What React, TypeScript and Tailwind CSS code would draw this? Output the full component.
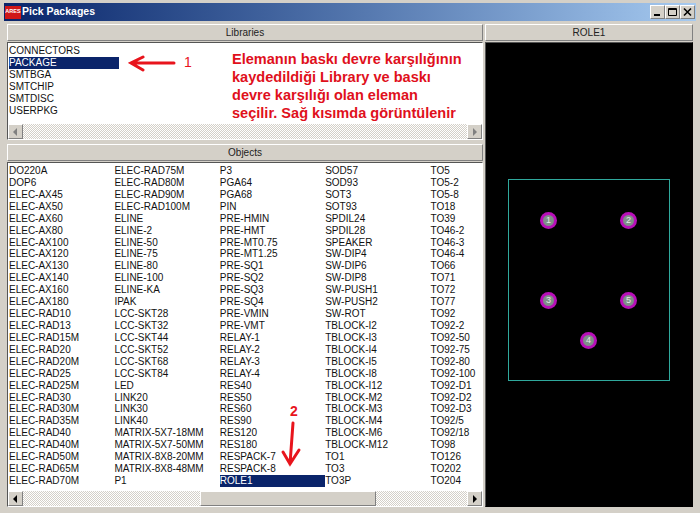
import * as React from "react";

const libraries = ["CONNECTORS", "PACKAGE", "SMTBGA", "SMTCHIP", "SMTDISC", "USERPKG"];

const objects = [
  ["DO220A", "DOP6", "ELEC-AX45", "ELEC-AX50", "ELEC-AX60", "ELEC-AX80", "ELEC-AX100", "ELEC-AX120", "ELEC-AX130", "ELEC-AX140", "ELEC-AX160", "ELEC-AX180", "ELEC-RAD10", "ELEC-RAD13", "ELEC-RAD15M", "ELEC-RAD20", "ELEC-RAD20M", "ELEC-RAD25", "ELEC-RAD25M", "ELEC-RAD30", "ELEC-RAD30M", "ELEC-RAD35M", "ELEC-RAD40", "ELEC-RAD40M", "ELEC-RAD50M", "ELEC-RAD65M", "ELEC-RAD70M"],
  ["ELEC-RAD75M", "ELEC-RAD80M", "ELEC-RAD90M", "ELEC-RAD100M", "ELINE", "ELINE-2", "ELINE-50", "ELINE-75", "ELINE-80", "ELINE-100", "ELINE-KA", "IPAK", "LCC-SKT28", "LCC-SKT32", "LCC-SKT44", "LCC-SKT52", "LCC-SKT68", "LCC-SKT84", "LED", "LINK20", "LINK30", "LINK40", "MATRIX-5X7-18MM", "MATRIX-5X7-50MM", "MATRIX-8X8-20MM", "MATRIX-8X8-48MM", "P1"],
  ["P3", "PGA64", "PGA68", "PIN", "PRE-HMIN", "PRE-HMT", "PRE-MT0.75", "PRE-MT1.25", "PRE-SQ1", "PRE-SQ2", "PRE-SQ3", "PRE-SQ4", "PRE-VMIN", "PRE-VMT", "RELAY-1", "RELAY-2", "RELAY-3", "RELAY-4", "RES40", "RES50", "RES60", "RES90", "RES120", "RES180", "RESPACK-7", "RESPACK-8", "ROLE1"],
  ["SOD57", "SOD93", "SOT3", "SOT93", "SPDIL24", "SPDIL28", "SPEAKER", "SW-DIP4", "SW-DIP6", "SW-DIP8", "SW-PUSH1", "SW-PUSH2", "SW-ROT", "TBLOCK-I2", "TBLOCK-I3", "TBLOCK-I4", "TBLOCK-I5", "TBLOCK-I8", "TBLOCK-I12", "TBLOCK-M2", "TBLOCK-M3", "TBLOCK-M4", "TBLOCK-M6", "TBLOCK-M12", "TO1", "TO3", "TO3P"],
  ["TO5", "TO5-2", "TO5-8", "TO18", "TO39", "TO46-2", "TO46-3", "TO46-4", "TO66", "TO71", "TO72", "TO77", "TO92", "TO92-2", "TO92-50", "TO92-75", "TO92-80", "TO92-100", "TO92-D1", "TO92-D2", "TO92-D3", "TO92/5", "TO92/18", "TO98", "TO126", "TO202", "TO204"],
];

const raised =
  "bg-[#d4d0c8] border border-t-white border-l-white border-r-[#808080] border-b-[#808080]";

function HeaderBar({ label }: { label: string }) {
  return (
    <div className={`${raised} h-[17px] flex items-center justify-center text-[10px] text-[#222]`}>
      {label}
    </div>
  );
}

function WinButton({ children }: { children: React.ReactNode }) {
  return (
    <div className={`${raised} w-[15px] h-[14px] flex items-center justify-center`}>
      <svg width="11" height="10" viewBox="0 0 11 10" className="text-black">
        {children}
      </svg>
    </div>
  );
}

function ScrollArrow({ dir, light }: { dir: "left" | "right"; light?: boolean }) {
  return (
    <div className={`${raised} w-[15px] h-full flex items-center justify-center shrink-0`}>
      <svg width="5" height="8" viewBox="0 0 5 8">
        <path d={dir === "left" ? "M4 0 L0 4 L4 8 Z" : "M1 0 L5 4 L1 8 Z"} fill={light ? "#808080" : "#000"} />
      </svg>
    </div>
  );
}

const dither =
  "bg-[repeating-conic-gradient(#ffffff_0_25%,#d4d0c8_0_50%)] bg-[length:2px_2px]";

function Pad({ n }: { n: number }) {
  return (
    <div className="w-[17px] h-[17px] rounded-full bg-[#b80fb8] flex items-center justify-center">
      <div className="w-[11px] h-[11px] rounded-full bg-[#7f8f88] flex items-center justify-center text-[9px] leading-none text-[#e8e8e8]">
        {n}
      </div>
    </div>
  );
}

export default function App() {
  return (
    <div
      className="w-[700px] h-[513px] bg-[#d4d0c8] overflow-hidden px-[4px] pt-[3px] flex flex-col"
      style={{ fontFamily: '"Liberation Sans", Arial, sans-serif' }}
    >
      {/* title bar */}
      <div className="h-[18px] shrink-0 bg-gradient-to-r from-[#0a246a] to-[#a6caf0] flex items-center pl-[1px] pr-[1px]">
        <div className="w-[16px] h-[13px] bg-[#d01818] flex items-center justify-center text-[5.5px] font-bold text-white leading-none">
          ARES
        </div>
        <span className="ml-[1px] text-[10.5px] font-bold text-white">Pick Packages</span>
        <div className="ml-auto flex items-center">
          <WinButton>
            <rect x="2" y="7" width="6" height="2" fill="currentColor" />
          </WinButton>
          <WinButton>
            <path d="M1.5 1.5 H9.5 V8.5 H1.5 Z M1.5 2.5 H9.5" stroke="currentColor" fill="none" />
          </WinButton>
          <WinButton>
            <path d="M2 1.5 L9 8.5 M9 1.5 L2 8.5" stroke="currentColor" strokeWidth="1.6" fill="none" />
          </WinButton>
        </div>
      </div>

      <div className="flex gap-[2px] pl-[3px] pr-[3px] pt-[3px] h-[488px]">
        {/* left column */}
        <div className="w-[476px] flex flex-col">
          <HeaderBar label="Libraries" />
          <div className="relative mt-[1px] h-[98px] border border-t-[#555] border-l-[#555] border-r-white border-b-white bg-white flex flex-col">
            <div className="flex-1 pt-[2px] pl-[1px] text-[10px] text-[#111]">
              {libraries.map((name) => (
                <div
                  key={name}
                  className={`h-[12px] leading-[12px] w-[110px] ${name === "PACKAGE" ? "bg-[#0a246a] text-white" : ""}`}
                >
                  {name}
                </div>
              ))}
            </div>
            <div className="h-[15px] flex">
              <ScrollArrow dir="left" light />
              <div className={`flex-1 ${dither}`} />
              <ScrollArrow dir="right" light />
            </div>

            {/* callout 1 */}
            <svg className="absolute left-[120px] top-[9px]" width="60" height="22" viewBox="0 0 60 22">
              <path d="M46 11 H4 M15 5 L3 11 L15 18" stroke="#e8141c" strokeWidth="3" fill="none" strokeLinecap="round" />
            </svg>
            <span className="absolute left-[176px] top-[12px] text-[14px] leading-[14px] text-[#e8141c]">1</span>
            <div className="absolute left-[224px] top-[7px] w-[250px] text-[14.55px] leading-[18px] font-bold text-[#e0101c] whitespace-nowrap">
              <div>Elemanın baskı devre karşılığının</div>
              <div>kaydedildiği Library ve baskı</div>
              <div>devre karşılığı olan eleman</div>
              <div>seçilir. Sağ kısımda görüntülenir</div>
            </div>
          </div>

          <div className="mt-[4px]">
            <HeaderBar label="Objects" />
          </div>
          <div className="relative mt-[1px] h-[345px] border border-t-[#555] border-l-[#555] border-r-white border-b-white bg-white flex flex-col">
            <div className="flex-1 flex pt-[2px] pl-[1px] text-[10px] text-[#111]">
              {objects.map((col, i) => (
                <div key={i} className="w-[105.4px] shrink-0">
                  {col.map((name) => (
                    <div
                      key={name}
                      className={`h-[11.93px] leading-[12px] whitespace-nowrap ${name === "ROLE1" ? "bg-[#0a246a] text-white" : ""}`}
                    >
                      {name}
                    </div>
                  ))}
                </div>
              ))}
            </div>
            <div className="h-[15px] flex">
              <ScrollArrow dir="left" />
              <div className={`flex-1 flex ${dither}`}>
                <div className={`${raised} ml-[177px] w-[176px] h-full`} />
              </div>
              <ScrollArrow dir="right" />
            </div>

            {/* callout 2 */}
            <span className="absolute left-[282px] top-[241px] text-[14px] leading-[14px] font-bold text-[#e8141c]">2</span>
            <svg className="absolute left-[270px] top-[257px]" width="26" height="50" viewBox="0 0 26 50">
              <path d="M15 3 L12 44 M5 32 L12 44 L21 30" stroke="#e8141c" strokeWidth="3" fill="none" strokeLinecap="round" />
            </svg>
          </div>
        </div>

        {/* right column */}
        <div className="w-[208px] flex flex-col">
          <HeaderBar label="ROLE1" />
          <div className="mt-[1px] h-[465px] bg-black border border-t-[#555] border-l-[#555] border-r-black border-b-black flex flex-col items-center pt-[136px]">
            <div className="w-[162px] h-[202px] border border-[#2fa89c] relative">
              <div className="absolute left-[31px] top-[32px]"><Pad n={1} /></div>
              <div className="absolute left-[111px] top-[32px]"><Pad n={2} /></div>
              <div className="absolute left-[31px] top-[112px]"><Pad n={3} /></div>
              <div className="absolute left-[111px] top-[112px]"><Pad n={5} /></div>
              <div className="absolute left-[71px] top-[152px]"><Pad n={4} /></div>
            </div>
          </div>
        </div>
      </div>
    </div>
  );
}
